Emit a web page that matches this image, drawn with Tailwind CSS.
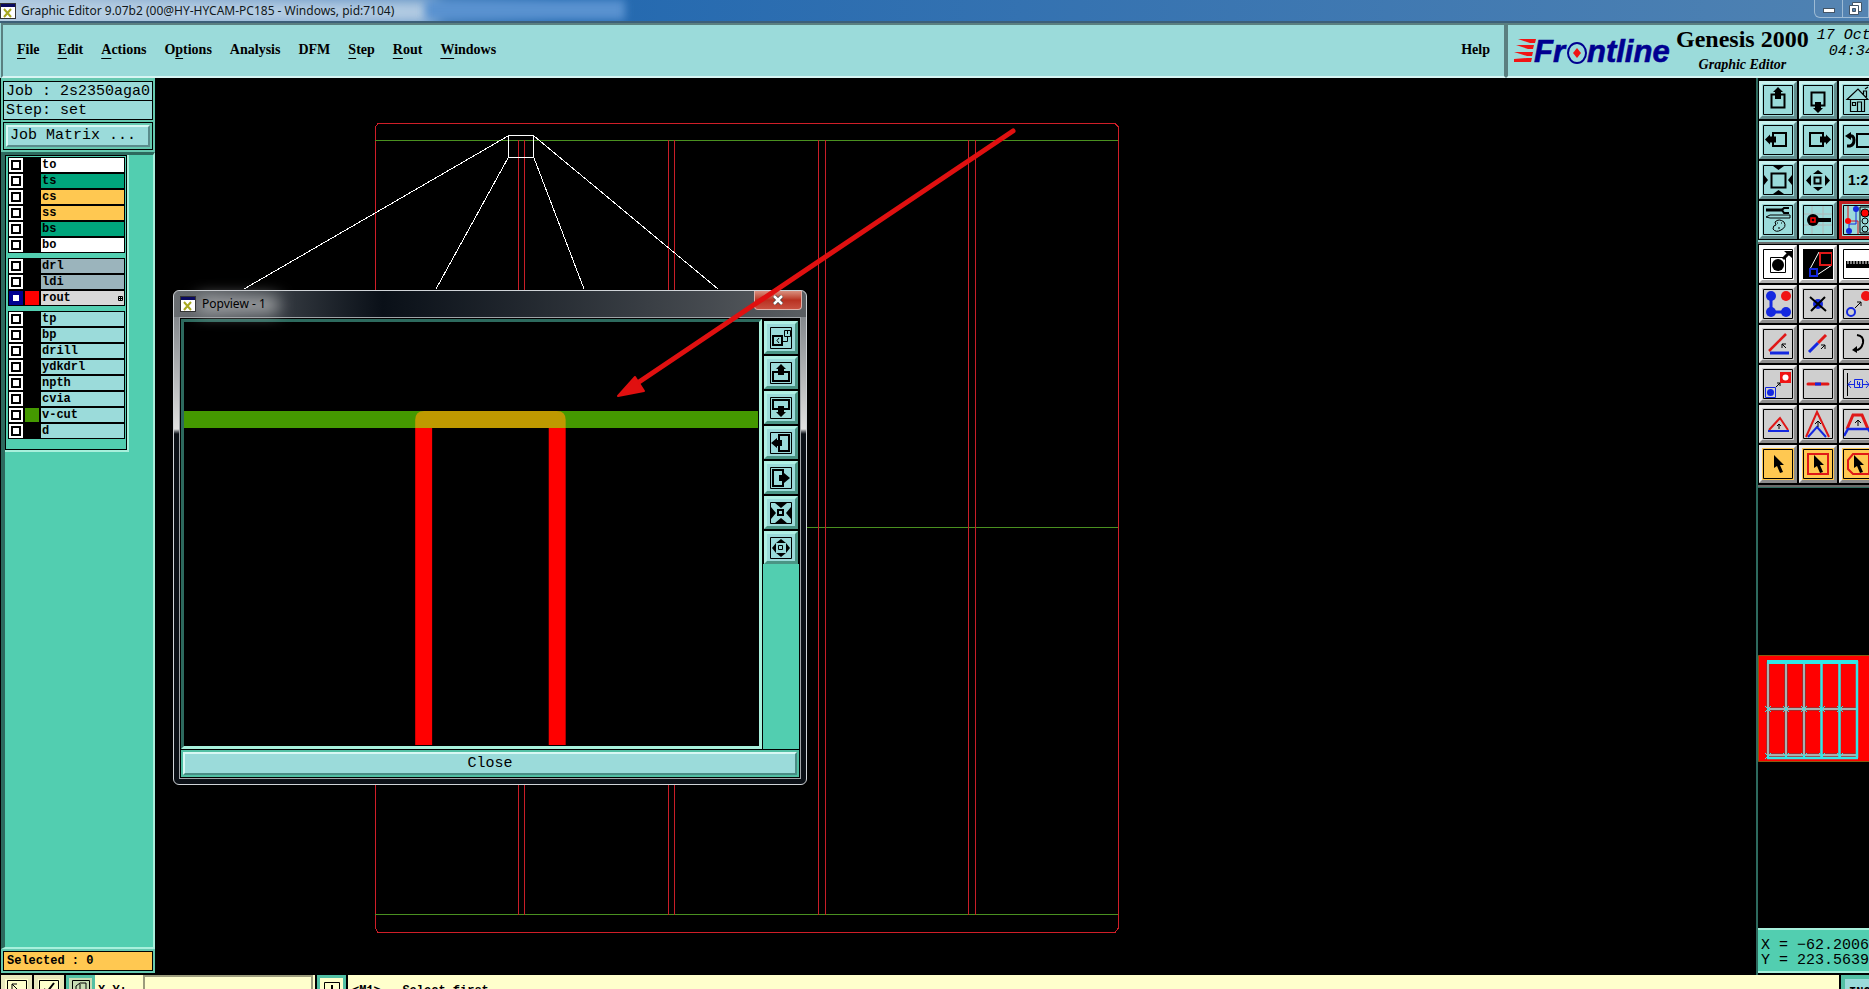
<!DOCTYPE html>
<html lang="en">
<head>
    <meta charset="UTF-8">
    <meta name="viewport" content="width=device-width, initial-scale=1.0">
    <script src="https://cdn.jsdelivr.net/npm/@tailwindcss/browser@4"></script>
    <title>Graphic Editor</title>
</head>
<body class="bg-black text-black h-screen flex flex-col overflow-hidden font-['Liberation_Mono',monospace]">

    <!-- Window title bar -->
    <div class="h-[23px] shrink-0 flex items-center justify-between border-b-2 border-[#3c5f78] bg-linear-to-r from-[#9db9d2] via-[#2369b0] via-30% to-[#4f82b2] relative overflow-hidden">
        <div class="absolute -left-6 top-0 w-[460px] h-6 bg-[#bcd2e6] blur-sm"></div>
        <div class="absolute left-[425px] top-0 w-[200px] h-5 bg-[#5a92d0] blur-xs"></div>
        <div class="relative flex items-center gap-[5px]">
            <svg width="16" height="16" viewBox="0 0 16 16"><rect x=".5" y=".5" width="15" height="15" fill="#fff" stroke="#333"/><path d="M1 1h14v3H1z" fill="#0a0a60"/><path d="M4 6l7 8M11 6l-7 8" stroke="#a8a820" stroke-width="2"/></svg>
            <span class="font-['Noto_Sans',sans-serif] text-[12px] leading-5 text-[#101820]">Graphic Editor 9.07b2 (00@HY-HYCAM-PC185 - Windows, pid:7104)</span>
        </div>
        <div class="relative self-start flex w-[55px] h-[18px] shrink-0 overflow-hidden border border-t-0 border-[#9dbbd5] rounded-bl-md bg-[#5584b2]">
            <button aria-label="Minimize" class="w-7 shrink-0 border-r border-[#9dbbd5] flex items-center justify-center"><span class="w-3 h-[5px] mt-1 bg-white border border-[#456]"></span></button>
            <button aria-label="Restore" class="w-7 shrink-0 flex items-center pl-1.5">
                <svg width="13" height="13" viewBox="0 0 13 13" fill="#fff" stroke="#456"><path d="M3.5.5h9v9h-9z"/><path d="M.5 3.500h9v9h-9z"/><path d="M3.500 6.500h3v3h-3z" fill="#5584b2"/></svg>
            </button>
        </div>
    </div>

    <!-- Menu bar and product banner -->
    <header class="flex h-[55px] shrink-0 bg-[#9bdbda]">
        <nav class="flex flex-1 items-center gap-[18px] ml-px px-3.5 pb-0.5 border-2 border-t-[#5a7f80] border-l-[#5a7f80] border-r-[#5a7f80] border-b-[#d8f5f3] font-['Liberation_Serif',serif] font-bold text-[14px] leading-5">
            <button><u class="underline-offset-4">F</u>ile</button>
            <button><u class="underline-offset-4">E</u>dit</button>
            <button><u class="underline-offset-4">A</u>ctions</button>
            <button>O<u class="underline-offset-4">p</u>tions</button>
            <button>Analysis</button>
            <button>DFM</button>
            <button><u class="underline-offset-4">S</u>tep</button>
            <button><u class="underline-offset-4">R</u>out</button>
            <button><u class="underline-offset-4">W</u>indows</button>
            <button class="ml-auto">Help</button>
        </nav>
        <div class="w-[363px] shrink-0 flex border-l-2 border-t-2 border-b-2 border-t-[#5a7f80] border-l-[#5a7f80] border-b-[#d8f5f3] overflow-hidden">
            <svg class="shrink-0 ml-1.5 mt-2.5" width="162" height="34" viewBox="0 0 162 34">
                <g fill="#f01414"><path d="M4 4h18l-1 4h-5z"/><path d="M2 10h18l-1 4h-5z"/><path d="M0 17h19l-1 4h-5z"/><path d="M0 24l13-1h5l-1 4H0z"/></g>
                <g fill="#000090" stroke="#000090" stroke-width=".6" font-family="Liberation Sans, sans-serif" font-size="31" font-weight="bold" font-style="italic">
                    <text x="20" y="27">Fr</text>
                    <text x="73" y="27">ntline</text>
                </g>
                <ellipse cx="63" cy="18" rx="9" ry="10" fill="#9bdbda" stroke="#000090" stroke-width="2"/>
                <path d="M63 13l4 5-4 5-4-5z" fill="#f01414"/>
            </svg>
            <div class="shrink-0 flex flex-col items-center font-['Liberation_Serif',serif] font-bold whitespace-nowrap">
                <span class="text-[24px] leading-7">Genesis 2000</span>
                <span class="text-[14px] leading-6 italic">Graphic Editor</span>
            </div>
            <div class="shrink-0 ml-2 pt-[3px] flex flex-col text-[15px] leading-4 italic">
                <span>17 Oct</span>
                <span class="pl-3">04:34</span>
            </div>
        </div>
    </header>

    <main class="flex flex-1 min-h-0">

        <!-- Job info and layer list -->
        <aside class="w-[154px] ml-px shrink-0 flex flex-col pt-px mb-0.5 bg-[#66c9b0]">
            <div class="mx-0.5 mt-0.5 border border-black divide-y divide-black bg-[#9bdbda] text-[15px] leading-5 whitespace-nowrap">
                <div class="pl-0.5 h-[19px]">Job : 2s2350aga0</div>
                <div class="pl-0.5 h-[18px]">Step: set</div>
            </div>
            <div class="mx-0.5 mt-0.5 p-0.5 border border-black">
                <button class="block w-full h-[22px] text-left pl-0.5 bg-[#9bdbda] border-2 border-t-[#d8f8f4] border-l-[#d8f8f4] border-r-[#5a8c8c] border-b-[#5a8c8c] text-[15px] leading-[18px]">Job Matrix ...</button>
            </div>
            <div class="flex-1 mt-0.5 bg-[#52ceb0] border-t-3 border-l-4 border-r-2 border-b-2 border-t-[#2d6a5e] border-l-[#2d6a5e] border-r-[#a8f0dc] border-b-[#a8f0dc]">
                <div class="w-[124px] border-r-2 border-b-2 border-[#a8f0dc]">
                    <div id="layers" class="border border-black pl-0.5 pr-px pt-px pb-2.5 flex flex-col gap-[5px] text-[12px] font-bold leading-[14px]"></div>
                </div>
            </div>
            <div class="m-0.5 h-5 border border-black bg-[#ffc851] pl-[3px] text-[12px] leading-[18px] font-bold">Selected : 0</div>
        </aside>

        <!-- Drawing area -->
        <section class="relative flex-1 min-w-0 overflow-hidden">
            <svg class="block" width="1600" height="897" viewBox="155 78 1600 897" fill="none" shape-rendering="crispEdges">
                <path d="M378 123.500H1115L1118.500 127V928L1115 932.500H378L375.500 928V127Z" stroke="#d01e28"/>
                <path d="M375 140.500H1118M375 527.500H1118M375 914.500H1118" stroke="#4a9020"/>
                <path d="M518.500 140V915M524.500 140V915M668.500 140V915M674.500 140V915M818.500 140V915M825.500 140V915M968.500 140V915M975.500 140V915" stroke="#c81e28"/>
                <path d="M508.500 135.500h25v22h-25zM508 136L244 289M508 158L436 289M534 158L584 289M534 136L718 289" stroke="#fff"/>
            </svg>

            <!-- Popview window -->
            <div class="absolute left-[18px] top-[212px] w-[634px] rounded-md border border-[#d0d4d8] px-[5px] pb-[5px] bg-linear-to-b from-[#70757a] via-[#e0e0e0] via-28% to-[#0b1016] to-29%">
                <div class="relative -mx-[5px] h-[26px] rounded-t-md flex items-center pl-1.5 bg-linear-to-r from-[#6a6e72] via-[#0a1018] via-33% to-[#5a5e62]">
                    <div class="absolute left-6 top-1.5 w-20 h-4 bg-[#a8aaac] blur-sm"></div>
                    <svg class="relative" width="16" height="16" viewBox="0 0 16 16"><rect x=".5" y=".5" width="15" height="15" fill="#fff" stroke="#333"/><path d="M1 1h14v3H1z" fill="#0a0a60"/><path d="M4 6l7 8M11 6l-7 8" stroke="#a8a820" stroke-width="2"/></svg>
                    <span class="relative ml-1.5 font-['Noto_Sans',sans-serif] text-[12px]">Popview - 1</span>
                    <button aria-label="Close window" class="absolute right-1 top-0 w-[48px] h-[19px] rounded-b-sm border border-t-0 border-[#e0b0a8] bg-linear-to-b from-[#d89080] via-[#b83020] to-[#c85040] flex items-center justify-center">
                        <svg width="12" height="10" viewBox="0 0 12 10"><path d="M2 1l8 8M10 1l-8 8" stroke="#444" stroke-width="4"/><path d="M2 1l8 8M10 1l-8 8" stroke="#fff" stroke-width="2.500"/></svg>
                    </button>
                </div>
                <div class="border border-[#a0a4a8] bg-black p-px">
                    <div class="flex">
                        <div class="flex-1 h-[430px] border-3 border-t-[#2d6a5e] border-l-[#2d6a5e] border-r-[#a8f0dc] border-b-[#a8f0dc]">
                            <svg class="block w-full h-full" viewBox="0 0 577 424" preserveAspectRatio="none">
                                <path d="M0 89h576v17H0z" fill="#449900"/>
                                <path d="M232 106h17v317h-17zM366 106h17v317h-17z" fill="#ff0000"/>
                                <path d="M232 106V98q0-9 9-9h133q9 0 9 9v8z" fill="#bf9900"/>
                            </svg>
                        </div>
                        <div class="w-[36px] ml-px bg-[#52ceb0]">
                            <div id="popTools" class="flex flex-col gap-0.5 px-px pt-0.5 bg-black"></div>
                        </div>
                    </div>
                    <div class="mt-px p-0.5 bg-[#52c0a4]">
                        <button class="block w-full h-[23px] bg-[#9bdbda] border-2 border-t-[#d8f8f4] border-l-[#d8f8f4] border-r-[#4a8c84] border-b-[#4a8c84] text-[15px] leading-5">Close</button>
                    </div>
                </div>
            </div>

            <!-- Annotation arrow -->
            <svg class="absolute left-0 top-0 pointer-events-none" width="900" height="400" viewBox="155 78 900 400">
                <path d="M1013 131L636 384" stroke="#e01010" stroke-width="5" stroke-linecap="round"/>
                <path d="M618 396L635 377L644 391Z" fill="#e01010" stroke="#e01010" stroke-width="2" stroke-linejoin="round"/>
            </svg>
        </section>

        <!-- Tool panel -->
        <aside class="w-[113px] shrink-0 flex flex-col overflow-hidden border-l-2 border-[#2d6a5e]">
            <div class="w-[120px] pl-px pt-[3px] pb-px border-b-2 border-[#9bdbda]">
                <div id="viewTools" class="grid grid-cols-[repeat(3,38px)] gap-0.5"></div>
            </div>
            <div class="w-[120px] pl-px pt-px pb-0.5 border-t-2 border-b-2 border-[#6a6a6a]">
                <div id="editTools" class="grid grid-cols-[repeat(3,38px)] gap-0.5"></div>
            </div>
            <div class="flex-1 flex items-center border-t border-[#2d6a5e]">
                <svg class="shrink-0" width="111" height="107" viewBox="0 0 111 107" fill="none">
                    <path d="M.5.5h120v106H.5z" fill="#ff0000" stroke="#8a5a10"/>
                    <path d="M28 7v95M46 7v95M10 7v95M10 54h89M10 100h89" stroke="#505050" stroke-width="3"/>
                    <path d="M28 7v95M46 7v95M10 7v95M10 54h89M10 100h89" stroke="#a8b0b0" stroke-width="2"/>
                    <path d="M63.500 7v95M81.500 7v95M99 6v97M9 103h91" stroke="#30e8e8" stroke-width="2.500"/>
                    <path d="M9 7h91" stroke="#30e8e8" stroke-width="4"/>
                    <path id="marks" stroke="#30e8e8" d=""/>
                </svg>
            </div>
            <div class="h-[45px] w-[120px] border-t-2 border-b-2 border-[#a8f0dc] bg-[#52ceb0] pl-[3px] pt-2 text-[15px] leading-[15px] whitespace-pre">X = −62.2006
Y = 223.5639</div>
            <div class="h-0.5 shrink-0"></div>
        </aside>
    </main>

    <!-- Status bar -->
    <footer class="h-3.5 shrink-0 overflow-hidden ml-px flex items-start gap-0.5 bg-black text-[12px] font-bold leading-4">
        <button aria-label="Corner snap" class="w-[31px] h-8 shrink-0 bg-[#ffffcc] border-4 border-[#e8e8bc] flex justify-center pt-px">
            <svg width="20" height="20" viewBox="0 0 20 20" fill="none" stroke="#000"><path d="M.5.5h19v19H.5zM5 12V4h5M5 4l7 7"/></svg>
        </button>
        <button aria-label="Check" class="w-[30px] h-8 shrink-0 bg-[#ffffcc] border-4 border-[#e8e8bc] flex justify-center pt-px">
            <svg width="20" height="20" viewBox="0 0 20 20" fill="none" stroke="#000"><path d="M.5.5h19v19H.5z"/><path d="M5 9l3 3 7-9" stroke-width="2"/></svg>
        </button>
        <button aria-label="Contour" class="w-[29px] h-8 shrink-0 bg-[#c8dcb4] border-3 border-[#52c0a4] flex justify-center pt-0.5">
            <svg width="18" height="20" viewBox="0 0 18 20" fill="none" stroke="#000"><path d="M.5.5h17v19H.5z"/><path d="M4 10V6l4-3h6v12M8 4v8"/></svg>
        </button>
        <div class="flex shrink-0 h-8 w-[220px] -ml-0.5 bg-[#ffffcc]">
            <label for="xy" class="w-12 pl-[3px] pt-2">X,Y:</label>
            <input id="xy" type="text" class="w-[170px] h-8 border-2 border-[#9c9c7c] bg-[#ffffcc]">
        </div>
        <button aria-label="Add" class="w-[29px] h-8 shrink-0 bg-[#ffffcc] border-3 border-[#52c0a4] flex justify-center pt-1">
            <svg width="16" height="16" viewBox="0 0 16 16" fill="none" stroke="#000"><path d="M.5.5h15v15H.5z"/><path d="M8 3v10" stroke-width="2"/></svg>
        </button>
        <div class="flex-1 h-8 bg-[#ffffcc] pl-1 pt-2 whitespace-pre">&lt;M1&gt; - Select first</div>
        <button class="w-[28px] h-8 shrink-0 overflow-hidden bg-[#9bdbda] border-4 border-r-0 border-[#52c0a4] pl-1 pt-1 text-left">INCH</button>
    </footer>

    <script>
        // name, label colour, swatch colour
        const layerGroups = [
            [["to", "bg-white", "bg-black"], ["ts", "bg-[#00a57c]", "bg-black"], ["cs", "bg-[#ffc851]", "bg-black"], ["ss", "bg-[#ffc851]", "bg-black"], ["bs", "bg-[#00a57c]", "bg-black"], ["bo", "bg-white", "bg-black"]],
            [["drl", "bg-[#9bb4bc]", "bg-black"], ["ldi", "bg-[#9bb4bc]", "bg-black"], ["rout", "bg-[#d8d8d8]", "bg-[#ff0000]"]],
            [["tp", "bg-[#9bdbda]", "bg-black"], ["bp", "bg-[#9bdbda]", "bg-black"], ["drill", "bg-[#9bdbda]", "bg-black"], ["ydkdrl", "bg-[#9bdbda]", "bg-black"], ["npth", "bg-[#9bdbda]", "bg-black"], ["cvia", "bg-[#9bdbda]", "bg-black"], ["v-cut", "bg-[#9bdbda]", "bg-[#449900]"], ["d", "bg-[#9bdbda]", "bg-black"]]
        ];

        document.getElementById("layers").innerHTML = layerGroups.map(group => `
            <div class="bg-black p-px flex flex-col gap-0.5">
                ${group.map(([name, color, swatch]) => `
                    <div class="flex gap-0.5 h-3.5">
                        <span class="w-3.5 shrink-0 flex items-center justify-center ${name === "rout" ? "bg-[#000090]" : "bg-white"}">
                            <input id="layer-${name}" type="checkbox" class="appearance-none block w-2.5 h-2.5 border-2 bg-white ${name === "rout" ? "border-[#000090]" : "border-black"}">
                        </span>
                        <span class="w-3.5 shrink-0 ${swatch}"></span>
                        <label for="layer-${name}" class="flex-1 flex items-center justify-between px-px ${color}">${name}${name === "rout" ? '<svg width="5" height="5" viewBox="0 0 5 5" fill="none" stroke="#000"><path d="M.5.5h4v4h-4zM2.500 0v5M0 2.500h5"/></svg>' : ""}</label>
                    </div>`).join("")}
            </div>`).join("");

        const K = 'fill="#000" stroke="none"';
        const R = 'stroke="#e01818"';
        const B = 'stroke="#1428e0"';
        const cursor = `<path d="M11 6v13l3-2 3 7 3-1-3-7h4z" ${K}/>`;

        const viewTools = [
            ["Pan up", `<path d="M8.500 9.500h13v13h-13z" stroke-width="2"/><path d="M15 2l5 5h-2v7h-6V7h-2z" ${K}/>`],
            ["Pan down", `<path d="M8.500 7.500h13v13h-13z" stroke-width="2"/><path d="M12 17h6v6h2l-5 5-5-5h2z" ${K}/>`],
            ["Home", `<path d="M4 14.500L15 4l10 10.500zM7.500 14v12.500h14V14M14.500 26v-9h4v9M9.500 17.500h3v3h-3zM20.500 10V6h3v6M22 4l3-2" stroke-width="1.200"/>`],
            ["Pan left", `<path d="M10 8h13v13H10z" stroke-width="2"/><path d="M2 14.500l5-5v2h6v6H7v2z" ${K}/>`],
            ["Pan right", `<path d="M7 8h13v13H7z" stroke-width="2"/><path d="M28 14.500l-5-5v2h-6v6h6v2z" ${K}/>`],
            ["Previous view", `<path d="M14 9h15v13H14z" stroke-width="2"/><path d="M4 21h3q4-1 4-6t-5-4" stroke-width="3"/><path d="M2 11l6-4v8z" ${K}/>`],
            ["Zoom out", `<path d="M8.500 8.500h14v14h-14z" stroke-width="2"/><path d="M10 1h11l-5.500 4zM10 29h11l-5.500-4zM1 10v10l4-5zM29 10v10l-4-5z" ${K}/>`],
            ["Zoom in", `<path d="M11.500 12.500h6v6h-6z" stroke-width="2"/><path d="M10 9h10l-5-4zM10 22h10l-5 4zM8 10v11l-5-5.500zM22 10v11l5-5.500z" ${K}/>`],
            ["Zoom ratio", `<text x="5" y="20" ${K} font-family="Liberation Sans, sans-serif" font-size="14" font-weight="bold">1:2</text>`],
            ["Setup", `<path d="M3 5h17" stroke-width="3"/><path d="M26 3h-5l-2 2 2 3h5" stroke-width="2"/><path d="M3 12l4-2h20v3H7zM12 17q4-4 9 0 3 5-3 8-5 3-8-1 0-4 3-4zM14 18h1M18 18h1M15 23h2"/>`],
            ["Probe", `<path d="M9 0v30M20 0v30M0 9h30M0 20h30" stroke="#b0b8b8"/><circle cx="10" cy="15" r="6" ${K}/><path d="M15 15h13" stroke-width="4"/><path d="M8 13h4v4H8z" stroke="#f00" stroke-width="1.500"/>`],
            ["Net control", `<path d="M5 1v15h10v14" ${R}/><path d="M13 4v15H6v6" ${B}/><circle cx="5" cy="16" r="3" fill="#f00" stroke="none"/><circle cx="13" cy="4" r="3" fill="#1428e0" stroke="none"/><circle cx="6" cy="26" r="3" fill="#1428e0" stroke="none"/><path d="M17 2h20v26H17z"/><circle cx="22" cy="8" r="4" fill="#f00"/><circle cx="22" cy="16" r="3"/><circle cx="22" cy="24" r="3"/>`]
        ];

        const editTools = [
            ["Select pad", `<path d="M7.500 8.500h15v15h-15z"/><circle cx="15" cy="16" r="6" ${K}/><path d="M20 10l6-6" stroke-width="3"/><path d="M21 2h8v7z" ${K}/>`],
            ["Popview", `<path d="M0 0h30v30H0z" ${K}/><path d="M7 20l9-17M14 26l15-10" stroke="#fff"/><path d="M17 4h12v12H17z" ${R} stroke-width="2"/><path d="M7 20h7v7H7z" ${B} stroke-width="2"/>`],
            ["Measure", `<path d="M3 12h27v7H3z" ${K}/><path d="M5 11v4M8 11v4M11 11v4M14 11v4M17 11v4M20 11v4M23 11v4M26 11v4" stroke="#fff"/>`],
            ["Add feature", `<path d="M8 8v15h15" ${B} stroke-width="3"/><circle cx="8" cy="7" r="5" fill="#1428e0" stroke="none"/><circle cx="8" cy="23" r="5" fill="#1428e0" stroke="none"/><circle cx="23" cy="23" r="5" fill="#1428e0" stroke="none"/><circle cx="23" cy="7" r="5" fill="#f01414" stroke="none"/>`],
            ["Delete", `<circle cx="15" cy="15" r="5" fill="#1428e0" stroke="none"/><path d="M7 8l16 14M22 8L8 22" stroke-width="2"/>`],
            ["Move", `<circle cx="8" cy="23" r="4" ${B} stroke-width="2"/><circle cx="23" cy="7" r="5" fill="#f01414" stroke="none"/><path d="M12 19l6-6M14 13h4v4"/>`],
            ["Rotate line", `<path d="M6 22L23 5" ${R} stroke-width="2.500"/><path d="M7 24h19" ${B} stroke-width="3"/><path d="M23 19l-4-4M19 19v-4h4"/>`],
            ["Stretch line", `<path d="M15 14l8-8" ${R} stroke-width="3"/><path d="M6 23l9-9" ${B} stroke-width="3"/><path d="M18 20l4-4M18 16h4v4"/>`],
            ["Arc", `<path d="M14 6q7 1 6 8-2 8-9 7" stroke-width="2"/><path d="M9 21l5-4v7z" ${K}/>`],
            ["Copy", `<path d="M2.500 18.500h10v10h-10z" ${B}/><circle cx="7.500" cy="23.500" r="3.500" fill="#1428e0" stroke="none"/><path d="M17 3h11v11H17z" fill="#f01414" stroke="none"/><circle cx="22.500" cy="8.500" r="3" fill="#fff" stroke="none"/><path d="M13 18l4-4M14 14h3v3"/>`],
            ["Break line", `<path d="M5 15h20" ${R} stroke-width="3" stroke-linecap="round"/><path d="M12 15h6" ${B} stroke-width="3"/>`],
            ["Spacing", `<path d="M4.500 4v23M26.500 4v23"/><path d="M11.500 10.500h8v8h-8zM5 15.500h6M20 15.500h6M8 12l-3 3.500 3 3.500M23 12l3 3.500-3 3.500M14.500 12v3.500h3M16.500 13v5" ${B}/>`],
            ["Triangle", `<path d="M6 21L17 9l8 12" ${R} stroke-width="2"/><path d="M5 22h21" ${B} stroke-width="2"/><path d="M16 20v-5M14 17l2-2 2 2"/>`],
            ["Peak", `<path d="M3 28L14 3l12 25" ${R} stroke-width="2"/><path d="M5 28l9-10 9 10" ${B} stroke-width="2"/><path d="M15 18v-6M12 15l3-3 3 3"/>`],
            ["Trapezoid", `<path d="M4 20l6-14h9l6 14" ${R} stroke-width="3"/><path d="M1 27l4-7h20l5 7" ${B} stroke-width="2.500"/><path d="M15 17v-6M12 14l3-3 3 3"/>`],
            ["Select", cursor],
            ["Select in box", `<path d="M5 5h20v20H5z" ${R} stroke-width="2"/>${cursor}`],
            ["Select in polygon", `<path d="M10 5h16v20H10l-5-5V11z" ${R} stroke-width="2"/>${cursor}`]
        ];

        const popTools = [
            ["Popview zoom", `<path d="M3 9h9v9H3z" stroke-width="2"/><path d="M14.500 3.500h6v6h-6zM12 14.500h5.500v-5M17.500 4v3M9 11l-2 2.500 2 2.500"/>`],
            ["Popview up", `<path d="M3 10h16v9H3z" stroke-width="2"/><path d="M11 2l5 5h-2v6H8V7H6z" ${K}/>`],
            ["Popview down", `<path d="M3 3h16v9H3z" stroke-width="2"/><path d="M8 9h6v6h2l-5 5-5-5h2z" ${K}/>`],
            ["Popview left", `<path d="M9 3h10v16H9z" stroke-width="2"/><path d="M1 11l6-5v2h5v6H7v2z" ${K}/>`],
            ["Popview right", `<path d="M3 3h10v16H3z" stroke-width="2"/><path d="M20 11l-6-5v2H9v6h5v2z" ${K}/>`],
            ["Popview out", `<path d="M8 8h5v5H8z" stroke-width="2"/><path d="M5 1h12l-6 5zM5 21h12l-6-5zM1 5v12l5-6zM21 5v12l-5-6z" ${K}/>`],
            ["Popview in", `<path d="M8.500 8.500h4v4h-4z"/><path d="M6 6h10l-5-4zM6 16h10l-5 4zM6 6v10l-4-5zM16 6v10l4-5z" ${K}/>`]
        ];

        function toolButton([label, icon], look) {
            return `<button aria-label="${label}" class="w-[38px] h-[38px] border-3 p-px ${look}">
                <svg width="30" height="30" viewBox="0 0 30 30" fill="none" stroke="#000">${icon}<path d="M.5.5h29v29H.5z"/></svg>
            </button>`;
        }

        const cyan = "bg-[#9bdbda] border-t-[#c8f2ee] border-l-[#c8f2ee] border-r-[#628c8c] border-b-[#628c8c]";
        const red = "bg-[#9bdbda] border-[#c02020]";
        const white = "bg-white border-t-white border-l-white border-r-[#b0b0b0] border-b-[#b0b0b0]";
        const gray = "bg-[#cfcfcf] border-t-[#eeeeee] border-l-[#eeeeee] border-r-[#8c8c8c] border-b-[#8c8c8c]";
        const orange = "bg-[#ffc851] border-t-[#eeeeee] border-l-[#eeeeee] border-r-[#8c8c8c] border-b-[#8c8c8c]";

        document.getElementById("viewTools").innerHTML = viewTools.map((t, i) => toolButton(t, i === 11 ? red : cyan)).join("");
        document.getElementById("editTools").innerHTML = editTools.map((t, i) => toolButton(t, i < 3 ? white : i > 14 ? orange : gray)).join("");
        document.getElementById("popTools").innerHTML = popTools.map(([label, icon]) => `
            <button aria-label="${label}" class="w-[34px] h-[33px] border-3 bg-[#9bdbda] border-t-[#b0f0e4] border-l-[#b0f0e4] border-r-[#4a9484] border-b-[#4a9484] flex items-center justify-center">
                <svg width="22" height="22" viewBox="0 0 22 22" fill="none" stroke="#000">${icon}<path d="M.5.5h21v21H.5z"/></svg>
            </button>`).join("");

        // small x at every datum of the panel preview
        const marks = [];
        [10, 28, 46, 64, 82].forEach(x => [54, 101].forEach(y => {
            marks.push(`M${x - 3} ${y - 3}l6 6M${x + 3} ${y - 3}l-6 6`);
        }));
        document.getElementById("marks").setAttribute("d", marks.join(""));
    </script>

</body>
</html>
